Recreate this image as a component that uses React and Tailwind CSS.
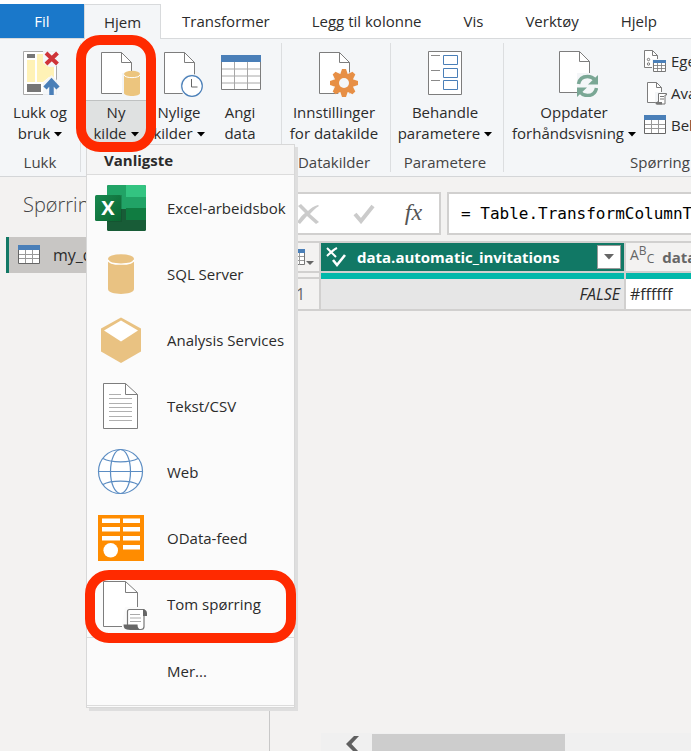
import clsx from 'clsx'
import { useState } from 'react'

const PageShape = ({ d = 'M9.5 3.5h20l10 10v31h-30z', fold = 'M29.5 3.5v10h10' }) => (
  <>
    <path d={d} fill="#fff" stroke="#7d7d7d" />
    <path d={fold} fill="none" stroke="#7d7d7d" />
  </>
)

const BigIcon = ({ children }) => (
  <svg width="48" height="48" viewBox="0 0 48 48" className="block shrink-0" aria-hidden="true">{children}</svg>
)

const CloseApplyIcon = () => (
  <BigIcon>
    <path d="M7.5 2.5h33v43h-33z" fill="#fff" stroke="#a9a9a9" />
    <path d="M11 5h8v4h-8zM11 35h14v8h-14z" fill="#777" />
    <path d="M11 11h8v22h-8zM21 5h6v8l5 4h6v14l-5-3-6 5h-6z" fill="#fff2b6" />
    <path d="M27 0h18v16h-3l-3 2h-6l-6-4zM27 38v-4l8.500-8 8.500 8v14h-17z" fill="#f4f6f8" opacity=".9" />
    <path d="M30 4l11.500 11M41.500 4l-11.500 11" stroke="#cf3438" strokeWidth="4" />
    <path d="M35.500 46V32M29 39l6.500-7 6.500 7" fill="none" stroke="#4a7fb8" strokeWidth="4.500" />
  </BigIcon>
)

const NewSourceIcon = () => (
  <BigIcon>
    <PageShape />
    <path d="M30 24h18v24h-18z" fill="#f4f6f8" />
    <path d="M32 26v18c0 4 16 4 16 0V26z" fill="#ecc57e" />
    <ellipse cx="40" cy="25" rx="8" ry="3.200" fill="#ecc57e" />
    <path d="M32 26c1 3.500 15 3.500 16 0" fill="none" stroke="#fff" />
  </BigIcon>
)

const RecentIcon = () => (
  <BigIcon>
    <PageShape />
    <circle cx="37" cy="37" r="12" fill="#f4f6f8" />
    <circle cx="37" cy="37" r="10.300" fill="#fff" stroke="#4a7fb8" strokeWidth="1.200" />
    <path d="M36.500 30v8h6" fill="none" stroke="#666" />
  </BigIcon>
)

const EnterDataIcon = () => (
  <BigIcon>
    <path d="M5.500 7.500h39v33h-39z" fill="#fff" />
    <path d="M5 20h40M5 27h40M5 34h40M18.500 13v27M31.500 13v27" stroke="#a8a8a8" fill="none" />
    <path d="M5.500 10.500h39v30h-39z" fill="none" stroke="#7d7d7d" />
    <path d="M5 6h40v7h-40z" fill="#4a7fb8" />
  </BigIcon>
)

const SettingsIcon = () => (
  <BigIcon>
    <PageShape />
    <circle cx="34" cy="34" r="12" fill="#f4f6f8" />
    {[0, 45, 90, 135].map((a) => (
      <path key={a} d="M32 20h4l2 6v16l-2 6h-4l-2-6v-16z" fill="#e78f45" transform={`rotate(${a} 34 34)`} />
    ))}
    <circle cx="34" cy="34" r="9.500" fill="#e78f45" />
    <circle cx="34" cy="34" r="5" fill="#f4f6f8" />
  </BigIcon>
)

const ParametersIcon = () => (
  <BigIcon>
    <path d="M7.500 2.500h33v43h-33z" fill="#fff" stroke="#7d7d7d" />
    <path d="M10 6.500h9M10 21.500h9M10 31.500h9" stroke="#8a8a8a" />
    <path d="M22.500 6.500h14v9h-14zM22.500 19.500h14v9h-14zM22.500 31.500h14v9h-14z" fill="#fff" stroke="#4a7fb8" />
  </BigIcon>
)

const RefreshIcon = () => (
  <BigIcon>
    <PageShape d="M9.500 2.500h20l10 10v31h-30z" fold="M29.500 2.500v10h10" />
    <path d="M27 24h21v24h-21z" fill="#f4f6f8" />
    <path d="M28.500 35c1-5.500 5-7.500 9-7.500 3 0 5.500 1 7.500 3.500M46.500 39c-1 5.500-5 7.500-9 7.500-3 0-5.500-1-7.500-3.500" fill="none" stroke="#7aa795" strokeWidth="3.500" />
    <path d="M48 26v9.500h-10zM27 48v-9.500h10z" fill="#7aa795" />
  </BigIcon>
)

const SmallIcon = ({ children }) => (
  <svg width="24" height="24" viewBox="0 0 24 24" className="block shrink-0" aria-hidden="true">{children}</svg>
)

const GridGlyph = () => (
  <SmallIcon>
    <path d="M.5 3.500h21v17h-21z" fill="#fff" stroke="#666" />
    <path d="M1 11.500h20M1 15.500h20M7.500 7v13M14.500 7v13" stroke="#999" fill="none" />
    <path d="M0 2h22v5h-22z" fill="#4a7fb8" />
  </SmallIcon>
)

const PropertiesIcon = () => (
  <SmallIcon>
    <path d="M.5 1.500h8l5 5v12h-13z" fill="#fff" stroke="#7d7d7d" />
    <path d="M8.500 1.500v5h5" fill="none" stroke="#7d7d7d" />
    <circle cx="4.500" cy="10.500" r="1.200" fill="none" stroke="#777" />
    <circle cx="4.500" cy="15" r="1.200" fill="none" stroke="#777" />
    <path d="M8 10h15v13h-15z" fill="#f4f6f8" />
    <path d="M9.500 12.500h12v10h-12z" fill="#fff" stroke="#777" />
    <path d="M13.500 14v8M17.500 14v8M9 16.500h13M9 19.500h13" stroke="#777" strokeWidth=".8" />
    <path d="M9 11h13v3h-13z" fill="#4a7fb8" />
  </SmallIcon>
)

const EditorIcon = () => (
  <SmallIcon>
    <path d="M3.500 1.500h9l5 5v15h-14z" fill="#fff" stroke="#7d7d7d" />
    <path d="M12.500 1.500v5h5" fill="none" stroke="#7d7d7d" />
    <path d="M11 11h12v13h-12z" fill="#f4f6f8" />
    <path d="M14.500 12.500h8v1.500h-1.500v9h-8v-2h1.500z" fill="#fff" stroke="#777" />
    <path d="M16 15.500h4M16 18h4" stroke="#777" />
    <path d="M11 21h7v2.500h-6z" fill="#777" />
  </SmallIcon>
)

const MenuIcon = ({ children }) => (
  <svg width="54" height="54" viewBox="0 0 54 54" className="block shrink-0" aria-hidden="true">{children}</svg>
)

const ExcelIcon = () => (
  <MenuIcon>
    <defs>
      <linearGradient id="xl" x1="0" y1="0" x2="1" y2="1">
        <stop offset="0" stopColor="#18884f" />
        <stop offset="1" stopColor="#0b6631" />
      </linearGradient>
      <clipPath id="xlClip"><rect x="13" y="4" width="39" height="46" rx="1.500" /></clipPath>
    </defs>
    <g clipPath="url(#xlClip)">
      <path d="M13 4h39v46h-39z" fill="#185c37" />
      <path d="M13 4h19v24h-19z" fill="#21a366" />
      <path d="M32 4h20v12h-20z" fill="#33c481" />
      <path d="M32 16h20v11h-20z" fill="#21a366" />
      <path d="M32 27h20v12h-20z" fill="#107c41" />
      <path d="M13 14h15v27h-15z" fill="#0a3d20" opacity=".25" />
    </g>
    <rect x="1" y="14" width="26" height="26" rx="1.500" fill="url(#xl)" />
    <text x="14" y="34" textAnchor="middle" fontFamily="Open Sans, sans-serif" fontWeight="700" fontSize="20" fill="#fff">X</text>
  </MenuIcon>
)

const SqlIcon = () => (
  <MenuIcon>
    <path d="M14 13v29c0 6.500 26 6.500 26 0V13z" fill="#e9c282" />
    <ellipse cx="27" cy="12" rx="13" ry="4.800" fill="#e9c282" />
    <path d="M14 13c1 5.500 25 5.500 26 0" fill="none" stroke="#fff" strokeWidth="1.400" />
  </MenuIcon>
)

const CubeIcon = () => (
  <MenuIcon>
    <path d="M27 4.500l20 11v23l-20 11.500-20-11.500v-23z" fill="#e9c282" />
    <path d="M27 7.500l17 10-17 11-17-11z" fill="#fff" />
  </MenuIcon>
)

const TextIcon = () => (
  <MenuIcon>
    <PageShape d="M9.500 4.500h22l12 11v34h-34z" fold="M31.500 4.500v11h12" />
    <path d="M15 15.500h12M15 19.500h23M15 24.500h23M15 28.500h23M15 32.500h23M15 37.500h23M15 41.500h23" stroke="#b0b0b0" />
  </MenuIcon>
)

const WebIcon = () => (
  <MenuIcon>
    <g fill="none" stroke="#5c8dc3" strokeWidth="1.200">
      <circle cx="26.500" cy="26.500" r="22" fill="#fff" />
      <ellipse cx="26.500" cy="26.500" rx="10" ry="22" />
      <path d="M4 26.500h45M9 13.500c8 4.500 27 4.500 35 0M9 39.500c8-4.500 27-4.500 35 0" />
    </g>
  </MenuIcon>
)

const ODataIcon = () => (
  <MenuIcon>
    <path d="M4 4h46v46h-46z" fill="#ff8c00" />
    <path d="M8 7.500h18v4.500h-18zM29 7.500h17v4.500h-17zM8 16h18v4.500h-18zM29 16h17v4.500h-17zM8 25h18v4.500h-18zM29 25h17v4.500h-17zM29 34h17v4.500h-17z" fill="#fff" />
    <circle cx="16.700" cy="39.300" r="7.300" fill="#fff" />
  </MenuIcon>
)

const BlankQueryIcon = () => (
  <MenuIcon>
    <PageShape d="M9.500 4.500h22l12 11v34h-34z" fold="M31.500 4.500v11h12" />
    <path d="M28 47l3-17h18v24h-21z" fill="#fbfbfb" />
    <path d="M33.500 48V34.500q0-2 2-2H50v17q0 3-3 3H36z" fill="#fff" stroke="#777" strokeWidth="1.200" />
    <path d="M49 32.500q4 0 4 4v2.500h-4zM29.500 47.500h14q0 5 4 5.200H34q-4.500 0-4.500-5.200z" fill="#666" />
    <path d="M36 37.500h10M36 41h11M36 44.500h11" stroke="#aaa" />
  </MenuIcon>
)

const Caret = () => (
  <svg width="8" height="5" viewBox="0 0 8 5" className="ml-1 inline-block align-middle" aria-hidden="true">
    <path d="M0 0h8l-4 4.500z" fill="#000" />
  </svg>
)

const tabs = ['Transformer', 'Legg til kolonne', 'Vis', 'Verktøy', 'Hjelp']

const sources = [
  { name: 'Excel-arbeidsbok', icon: <ExcelIcon /> },
  { name: 'SQL Server', icon: <SqlIcon /> },
  { name: 'Analysis Services', icon: <CubeIcon /> },
  { name: 'Tekst/CSV', icon: <TextIcon /> },
  { name: 'Web', icon: <WebIcon /> },
  { name: 'OData-feed', icon: <ODataIcon /> },
  { name: 'Tom spørring', icon: <BlankQueryIcon />, marked: true },
]

const TabBar = () => (
  <nav className="flex pt-1 bg-white border-b border-[#d8dadc] whitespace-nowrap">
    <button className="w-[84px] h-[34px] bg-[#1a78ca] text-white">Fil</button>
    <button className="w-[77px] h-[35px] -mb-px bg-[#f4f6f8] border border-b-0 border-[#d8dadc]">Hjem</button>
    {tabs.map((tab) => (
      <button key={tab} className="px-[21px] h-[34px]">{tab}</button>
    ))}
  </nav>
)

const Group = ({ label, className, children }) => (
  <>
    <section className={clsx('flex flex-col shrink-0', className)}>
      <div className="flex">{children}</div>
      <p className="pt-2 pb-1 leading-5 text-center text-[#444]">{label}</p>
    </section>
    <div className="w-px my-1 shrink-0 bg-[#dcdee0]" />
  </>
)

const RibbonButton = ({ icon, lines, caret, open, className, ...rest }) => (
  <button className={clsx('flex flex-col shrink-0 whitespace-nowrap', className)} {...rest}>
    <span className="flex justify-center w-full h-[61px] pt-[10px]">{icon}</span>
    <span className={clsx('w-full pt-px border-t leading-[21px]', open ? 'bg-[#dfe1e1] border-[#bfc1c1]' : 'border-transparent')}>
      <span className="block">{lines[0]}</span>
      <span className="block">{lines[1]}{caret && <Caret />}</span>
    </span>
  </button>
)

const SmallButton = ({ icon, text, caret }) => (
  <button className="flex items-center gap-[3px] h-8 whitespace-nowrap">
    {icon}
    <span>{text}{caret && <Caret />}</span>
  </button>
)

const SourceMenu = () => (
  <div className="absolute left-0 top-full z-10 w-[209px] bg-[#fbfbfb] border border-[#d8d8d8] shadow-[3px_3px_0_#dedede]">
    <h2 className="h-[30px] pl-[17px] leading-[31px] font-bold bg-[#f5f5f5] border-b border-[#dcdcdc]">Vanligste</h2>
    {sources.map((source) => (
      <button key={source.name} className="relative flex items-center gap-[19px] w-full h-[66px] pl-[7px] text-left whitespace-nowrap">
        {source.icon}
        {source.name}
        {source.marked && <span className="absolute -left-0.5 -right-0.5 -top-px -bottom-1.5 z-10 border-10 border-[#ff2a00] rounded-3xl" />}
      </button>
    ))}
    <button className="block w-full h-[69px] pl-20 text-left border-y border-[#dcdcdc]">Mer...</button>
    <div className="h-px" />
  </div>
)

const Ribbon = () => {
  const [open, setOpen] = useState(true)
  return (
    <header className="flex bg-[#f4f6f8] border-b border-[#d4d6d8]">
      <Group label="Lukk" className="w-20">
        <RibbonButton icon={<CloseApplyIcon />} lines={['Lukk og', 'bruk']} caret className="w-full" />
      </Group>
      <Group label="Ny spørring" className="w-[200px] pl-[5px]">
        <div className="relative">
          <RibbonButton
            icon={<NewSourceIcon />}
            lines={['Ny', 'kilde']}
            caret
            open={open}
            onClick={() => setOpen(!open)}
            className="w-[60px]"
          />
          {open && <SourceMenu />}
          <div className="absolute -inset-x-2.5 -top-1 -bottom-2 z-20 border-10 border-[#ff2a00] rounded-3xl pointer-events-none" />
        </div>
        <RibbonButton icon={<RecentIcon />} lines={['Nylige', 'kilder']} caret className="w-[66px]" />
        <RibbonButton icon={<EnterDataIcon />} lines={['Angi', 'data']} className="w-14" />
      </Group>
      <Group label="Datakilder" className="w-[108px] pr-1">
        <RibbonButton icon={<SettingsIcon />} lines={['Innstillinger', 'for datakilde']} className="w-full" />
      </Group>
      <Group label="Parametere" className="w-[112px] pr-1">
        <RibbonButton icon={<ParametersIcon />} lines={['Behandle', 'parametere']} caret className="w-full" />
      </Group>
      <Group label="Spørring" className="w-[312px]">
        <RibbonButton icon={<RefreshIcon />} lines={['Oppdater', 'forhåndsvisning']} caret className="w-[140px]" />
        <div className="pt-1.5">
          <SmallButton icon={<PropertiesIcon />} text="Egenskaper" />
          <SmallButton icon={<EditorIcon />} text="Avansert redigering" />
          <SmallButton icon={<GridGlyph />} text="Behandle" caret />
        </div>
      </Group>
    </header>
  )
}

const QueryPane = () => (
  <aside className="w-[270px] shrink-0 pt-3.5 border-r border-[#c8c8c8]">
    <h2 className="pl-[23px] text-xl leading-7 font-light text-[#444]">Spørringer</h2>
    <button className="flex items-center gap-[11px] w-[258px] h-9 mt-[18px] ml-1.5 pl-[9px] bg-[#c8c6c4] border-l-3 border-[#117865] text-base">
      <GridGlyph />
      my_data
    </button>
  </aside>
)

const FormulaBar = () => (
  <div className="flex gap-1.5 pl-1 pt-[15px]">
    <div className="flex items-center w-[167px] h-[43px] shrink-0 bg-white border-2 border-[#d1d0cf]">
      <button aria-label="Avbryt" className="flex justify-center w-[62px] pl-0.5">
        <svg width="22" height="20" viewBox="0 0 22 20">
          <path d="M1 2l3-2 7 7c3-3 6-5 10-6l1 1c-4 2-6 5-9 8l9 8-3 2-9-8-7 8-3-2c3-4 5-7 8-9z" fill="#cbcbcb" />
        </svg>
      </button>
      <button aria-label="Bruk" className="flex justify-center w-[52px]">
        <svg width="22" height="20" viewBox="0 0 22 20">
          <path d="M2 10l6 7L20 2" fill="none" stroke="#cbcbcb" strokeWidth="4" />
        </svg>
      </button>
      <button aria-label="Formel" className="w-[47px] pb-1 font-['Liberation_Serif',serif] italic text-2xl leading-7 text-[#555]">fx</button>
    </div>
    <input
      aria-label="Formellinje"
      className="grow min-w-0 h-[43px] pl-3 bg-white border-2 border-r-0 border-[#d1d0cf] font-['DejaVu_Sans_Mono',monospace] text-base text-black"
      defaultValue="= Table.TransformColumnTypes"
    />
  </div>
)

const DataTable = () => (
  <table className="w-[600px] mt-1.5 table-fixed border-separate border-spacing-0 whitespace-nowrap">
    <colgroup>
      <col className="w-[51px]" />
      <col className="w-[305px]" />
      <col />
    </colgroup>
    <thead>
      <tr className="h-8">
        <th className="p-0 pl-[18px] border-2 border-l-0 border-[#d1d0cf]">
          <span className="flex items-end">
            <svg width="26" height="18" viewBox="0 0 26 18">
              <path d="M.5 1.500h16v15h-16z" fill="#fff" stroke="#777" />
              <path d="M0 8.500h16M0 12.500h16M5.500 4v13M11.500 4v13" stroke="#999" />
              <path d="M0 1h17v4h-17z" fill="#4a7fb8" />
              <path d="M18 13h8l-4 4z" fill="#666" />
            </svg>
          </span>
        </th>
        <th className="p-0 pl-1 pr-[3px] bg-[#117865] border-y-2 border-r-2 border-[#d1d0cf] text-white">
          <span className="flex items-center">
            <svg width="22" height="22" viewBox="0 0 22 22" fill="none" stroke="#fff">
              <path d="M2 2l9 9M2 10c3-3 6-6 10-8" strokeWidth="2" />
              <path d="M8 14l4 5 8-10" strokeWidth="2.600" />
            </svg>
            <span className="grow pl-[10px] text-left">data.automatic_invitations</span>
            <button aria-label="Filter" className="flex items-center justify-center size-6 bg-white border border-[#999]">
              <svg width="10" height="6" viewBox="0 0 10 6"><path d="M0 0h10l-5 5.500z" fill="#666" /></svg>
            </button>
          </span>
        </th>
        <th className="p-0 pl-1 border-y-2 border-[#d1d0cf] text-left text-[#666]">
          <span className="flex items-center">
            <span className="flex font-normal text-sm leading-5">
              <span>A</span>
              <span className="-mt-1 text-xs leading-5">B</span>
              <span className="mt-1 text-xs leading-5">C</span>
            </span>
            <span className="pl-2">data.color</span>
          </span>
        </th>
      </tr>
      <tr className="h-1.5">
        <td className="border-b-2 border-r-2 border-[#d1d0cf]" />
        <td className="bg-[#01b8aa] border-r-2 border-[#d1d0cf]" />
        <td className="bg-[#01b8aa]" />
      </tr>
    </thead>
    <tbody>
      <tr className="h-8">
        <td className="p-0 pl-[26px] border-b-2 border-r-2 border-[#d1d0cf] text-base text-[#666]">1</td>
        <td className="p-0 pr-1 bg-[#e6e6e6] border-b-2 border-r-2 border-[#d1d0cf] text-right text-base italic">FALSE</td>
        <td className="p-0 pl-1 bg-white border-b-2 border-[#d1d0cf] text-base">#ffffff</td>
      </tr>
    </tbody>
  </table>
)

const ScrollBar = () => (
  <div className="flex items-start h-[18px] mt-auto ml-[51px] pt-px pl-6 bg-[#f0f0f0]">
    <svg width="27" height="18" viewBox="0 0 27 18" aria-hidden="true">
      <path d="M9 2h5l-7.500 8 7.500 8h-5l-8-8z" fill="#606060" />
    </svg>
    <div className="w-[193px] h-[17px] bg-[#cdcdcd]" />
  </div>
)

const App = () => {
  return (
    <div className="flex flex-col min-h-screen overflow-hidden bg-[#f3f2f1] font-['Open_Sans','Noto_Sans',sans-serif] text-[15px] text-[#2b2b2b]">
      <TabBar />
      <Ribbon />
      <div className="flex grow">
        <QueryPane />
        <main className="flex flex-col grow min-w-0">
          <FormulaBar />
          <DataTable />
          <ScrollBar />
        </main>
      </div>
    </div>
  )
}

export default App
